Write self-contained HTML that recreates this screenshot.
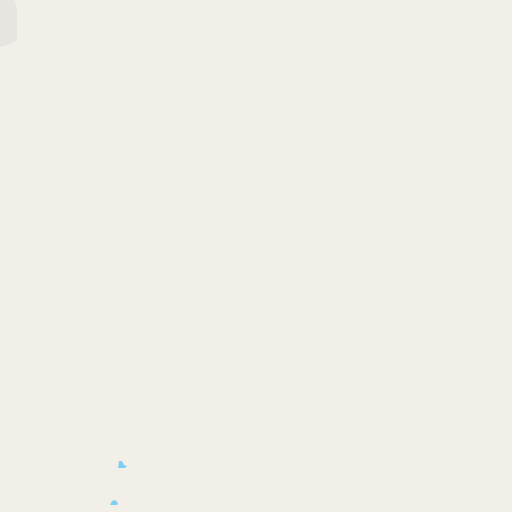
<!DOCTYPE html>
<html><head><style>
html,body{margin:0;padding:0;width:512px;height:512px;overflow:hidden;background:#f2efe9;}
</style></head><body>
<svg width="512" height="512" viewBox="0 0 512 512" style="position:absolute;left:0;top:0">
<rect width="512" height="512" fill="#f2efe9"/>
<path d="M0 0 H13 Q17 4 17 12 V36 Q17 42 11 44 L0 47 Z" fill="#e8e4df"/>
<path d="M119 461 L122 461 L124 465 L127 466 L125 468 L118 468 Z" fill="#7fd0f0"/>
<path d="M110 505 L112 501 L115 500 L118 503 L117 505 Z" fill="#7fd0f0"/>
</svg>
</body></html>
